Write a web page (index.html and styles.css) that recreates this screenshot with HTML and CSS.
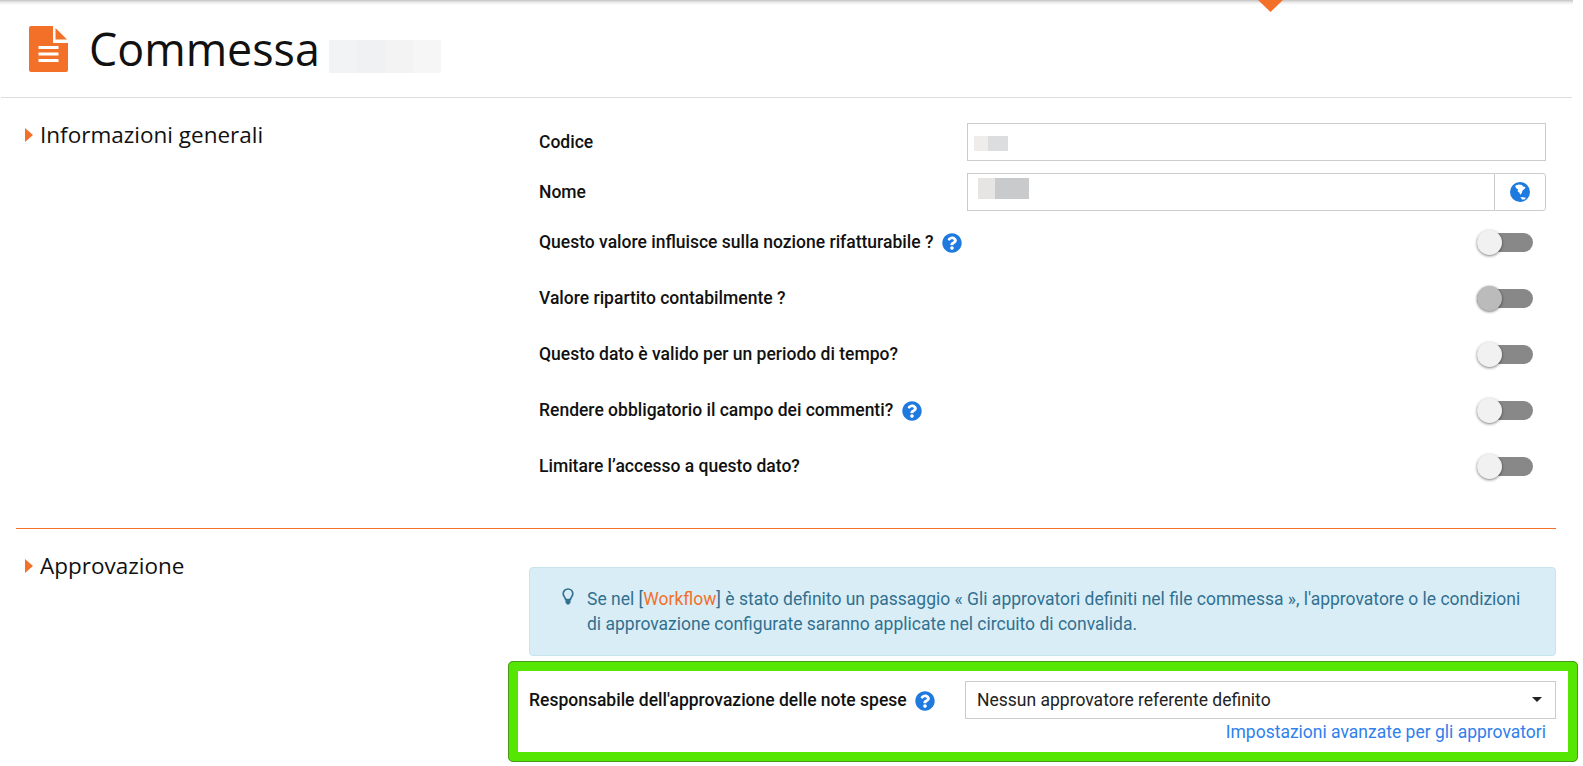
FILE: index.html
```html
<!DOCTYPE html>
<html lang="it">
<head>
<meta charset="utf-8">
<title>Commessa</title>
<link rel="stylesheet" href="styles.css">
</head>
<body>
<div class="topbar"><span class="caret"></span></div>
<header class="header">
  <svg class="file-icon" viewBox="0 0 39 46" aria-hidden="true">
    <path fill="#f37029" d="M2 0h22v17h15v27a2 2 0 0 1-2 2H2a2 2 0 0 1-2-2V2a2 2 0 0 1 2-2z"/>
    <path fill="#f37029" d="M26.500 2L38 13.500H26.500z"/>
    <path fill="#fff" d="M9.500 20h20v3h-20zM9.500 26.500h20v3h-20zM9.500 33h20v3h-20z"/>
  </svg>
  <h1 class="title">Commessa</h1>
  <div class="blur blur-title"><i></i><i></i><i></i><i></i></div>
</header>

<section class="section section-info">
  <h2 class="heading">Informazioni generali</h2>
  <div class="fields">
    <div class="row row-field">
      <label class="label">Codice</label>
      <div class="input"><div class="blur blur-code"><i></i><i></i></div></div>
    </div>
    <div class="row row-field">
      <label class="label">Nome</label>
      <div class="input input-group"><div class="blur blur-name"><i></i><i></i></div></div>
      <button class="globe-btn" type="button">
        <svg class="globe" viewBox="0 0 20 20" aria-hidden="true">
          <circle cx="10" cy="10" r="10" fill="#1f7ae0"/>
          <path fill="#fff" d="M6 3.200L9 2.400l3 .6 1 1.500 2.500.5-1 2-2 1.500-.7 2.500-1.600 1.800-.9-2.300-1.800-1.300.7-1.700-1.700-1-1.300-2z"/>
          <path fill="#fff" d="M10.500 15l2.500.3 3 .5-1.500 1.700-2.500 0z"/>
        </svg>
      </button>
    </div>
    <div class="row row-toggle">
      <span class="label">Questo valore influisce sulla nozione rifatturabile ?
        <svg class="help" viewBox="0 0 512 512" aria-hidden="true"><use href="#q"/></svg></span>
      <span class="toggle"><span class="thumb"></span></span>
    </div>
    <div class="row row-toggle">
      <span class="label">Valore ripartito contabilmente ?</span>
      <span class="toggle"><span class="thumb thumb-focus"></span></span>
    </div>
    <div class="row row-toggle">
      <span class="label">Questo dato è valido per un periodo di tempo?</span>
      <span class="toggle"><span class="thumb"></span></span>
    </div>
    <div class="row row-toggle">
      <span class="label">Rendere obbligatorio il campo dei commenti?
        <svg class="help" viewBox="0 0 512 512" aria-hidden="true"><use href="#q"/></svg></span>
      <span class="toggle"><span class="thumb"></span></span>
    </div>
    <div class="row row-toggle">
      <span class="label">Limitare l’accesso a questo dato?</span>
      <span class="toggle"><span class="thumb"></span></span>
    </div>
  </div>
</section>

<hr class="divider">

<section class="section section-approval">
  <h2 class="heading">Approvazione</h2>
  <div class="alert">
    <svg class="bulb" viewBox="0 0 12 17" aria-hidden="true">
      <path fill="none" stroke="#31708f" stroke-width="1.700" d="M6 1a4.800 4.800 0 0 0-4.800 4.800c0 2.400 2 3.400 2.400 5.700h4.800c.4-2.300 2.400-3.300 2.400-5.700A4.800 4.800 0 0 0 6 1z"/>
      <path fill="#31708f" d="M3.500 11h5v3.500l-1.500 2H5l-1.500-2z"/>
    </svg>
    <p class="alert-text">Se nel [<span class="accent">Workflow</span>] è stato definito un passaggio « Gli approvatori definiti nel file commessa », l'approvatore o le condizioni di approvazione configurate saranno applicate nel circuito di convalida.</p>
  </div>
</section>

<div class="highlight">
  <div class="highlight-row">
    <span class="label label-approver">Responsabile dell'approvazione delle note spese
      <svg class="help" viewBox="0 0 512 512" aria-hidden="true"><use href="#q"/></svg></span>
    <div class="select">Nessun approvatore referente definito<span class="select-arrow"></span></div>
  </div>
  <a class="advanced" href="#">Impostazioni avanzate per gli approvatori</a>
</div>

<svg class="defs" aria-hidden="true"><defs>
  <path id="q" fill="#1f7ae0" d="M504 256c0 136.997-111.043 248-248 248S8 392.997 8 256C8 119.083 119.043 8 256 8s248 111.083 248 248zM262.655 90c-54.497 0-89.255 22.957-116.549 63.758-3.536 5.286-2.353 12.415 2.715 16.258l34.699 26.310c5.205 3.947 12.621 3.008 16.665-2.122 17.864-22.658 30.113-35.797 57.303-35.797 20.429 0 45.698 13.148 45.698 32.958 0 14.976-12.363 22.667-32.534 33.976C247.128 238.528 216 254.941 216 296v4c0 6.627 5.373 12 12 12h56c6.627 0 12-5.373 12-12v-1.333c0-28.462 83.186-29.647 83.186-106.667 0-58.002-60.165-102-116.531-102zM256 338c-25.365 0-46 20.635-46 46 0 25.364 20.635 46 46 46s46-20.636 46-46c0-25.365-20.635-46-46-46z"/>
</defs></svg>
</body>
</html>
```
FILE: styles.css
```css
* { box-sizing: border-box; }
html, body { margin: 0; padding: 0; background: #fff; }
body {
  width: 1583px;
  height: 766px;
  overflow: hidden;
  position: relative;
  font-family: "Roboto", sans-serif;
  font-size: 17.5px;
  color: #111;
}
.topbar {
  position: relative;
  width: 1573px;
  height: 5px;
  background: linear-gradient(#c4c4c4, #ececec 50%, #fff);
}
.caret {
  position: absolute;
  left: 1258px;
  top: 0;
  width: 25px;
  height: 12px;
  background: #f37029;
  clip-path: polygon(0 0, 100% 0, 50% 100%);
}
.header {
  display: flex;
  align-items: flex-start;
  height: 93px;
  width: 1571px;
  margin-left: 1px;
  padding: 21px 0 0 28px;
  border-bottom: 1px solid #ddd;
}
.file-icon { width: 39px; height: 46px; flex: none; }
.title {
  margin: -7px 0 0 21px;
  font: 400 44.8px/60px "Open Sans", sans-serif;
  color: #111;
}
.blur { display: flex; }
.blur i { display: block; flex: 1; height: 100%; }
.blur-title {
  width: 112px;
  height: 33px;
  margin: 14px 0 0 9px;
}
.blur-title i:nth-child(1) { background: #f2f3f4; }
.blur-title i:nth-child(2) { background: #f0f1f2; }
.blur-title i:nth-child(3) { background: #f3f3f4; }
.blur-title i:nth-child(4) { background: #f6f6f7; }
.blur-code { width: 34px; height: 15px; margin: 12px 0 0 6px; }
.blur-code i:nth-child(1) { background: #eeedeb; flex: 2; }
.blur-code i:nth-child(2) { background: #dcdddf; flex: 3; }
.blur-name { width: 51px; height: 21px; margin: 4px 0 0 10px; }
.blur-name i:nth-child(1) { background: #e6e5e3; flex: 1; }
.blur-name i:nth-child(2) { background: #c9cacc; flex: 2; }
.section {
  display: grid;
  grid-template-columns: 529px 1fr;
}
.section-info { padding-top: 25px; }
.section-info .heading { margin-top: -3px; }
.heading {
  position: relative;
  margin: 0;
  padding-left: 40px;
  font: 400 22.5px/30px "Open Sans", sans-serif;
  color: #111;
}
.heading::before {
  content: "";
  position: absolute;
  left: 25px;
  top: 8px;
  border-left: 8px solid #f37029;
  border-top: 7px solid transparent;
  border-bottom: 7px solid transparent;
}
.fields { padding-left: 10px; width: 1017px; }
.row { display: flex; align-items: center; }
.row-field { height: 38px; margin-bottom: 12px; }
.row-field:nth-child(2) { margin-bottom: 3px; }
.row-toggle { height: 56px; justify-content: space-between; padding-right: 13px; }
.label { font-weight: 500; font-size: 17.5px; line-height: 22px; color: #111; display: block; }
.row-field .label { width: 428px; flex: none; }
.input {
  flex: 1;
  height: 38px;
  border: 1px solid #ccc;
  background: #fff;
}
.input-group { border-right: 0; }
.globe-btn {
  width: 52px;
  height: 38px;
  padding: 0;
  display: flex;
  align-items: center;
  justify-content: center;
  background: #fff;
  border: 1px solid #ccc;
  border-radius: 0 3px 3px 0;
}
.globe { width: 20px; height: 20px; }
.help { width: 20px; height: 20px; vertical-align: -5px; margin-left: 4px; }
.toggle {
  position: relative;
  display: block;
  width: 56px;
  height: 19px;
  border-radius: 10px;
  background: #888;
}
.thumb {
  position: absolute;
  left: 0;
  top: -3px;
  width: 25px;
  height: 25px;
  border-radius: 50%;
  background: #f1f1f1;
  box-shadow: 0 1px 3px rgba(0, 0, 0, .5);
}
.thumb-focus { background: #bbb; box-shadow: 0 1px 3px rgba(0, 0, 0, .45), 0 0 2px rgba(0, 0, 0, .2); }
.divider {
  height: 1px;
  margin: 34px 27px 0 16px;
  border: 0;
  background: #f37029;
}
.section-approval { padding-top: 38px; }
.section-approval .heading { margin-top: -16px; }
.alert {
  display: flex;
  width: 1027px;
  height: 89px;
  padding: 19px 20px 0 32px;
  background: #d9edf7;
  border: 1px solid #c5e4ee;
  border-radius: 4px;
  color: #31708f;
}
.bulb { width: 12px; height: 17px; flex: none; margin: 1px 13px 0 0; }
.alert-text { margin: 0; line-height: 25px; }
.accent { color: #f37029; }
.highlight {
  width: 1070px;
  height: 101px;
  margin: 5px 0 0 508px;
  padding: 0 12px 0 11px;
  border: 10px solid #55e604;
  border-radius: 5px;
  outline: 1px solid rgba(60, 90, 40, .55);
  outline-offset: -1px;
  background: #fff;
}
.highlight-row { display: flex; align-items: center; justify-content: space-between; margin-top: 10px; }
.label-approver { flex: none; }
.select {
  position: relative;
  width: 591px;
  height: 38px;
  padding: 0 11px;
  line-height: 36px;
  border: 1px solid #ccc;
  color: #222;
}
.select-arrow {
  position: absolute;
  right: 13px;
  top: 15px;
  border-top: 5px solid #222;
  border-left: 5px solid transparent;
  border-right: 5px solid transparent;
}
.advanced {
  display: block;
  margin-top: 2px;
  margin-right: 10px;
  text-align: right;
  line-height: 22px;
  color: #2f80ed;
  text-decoration: none;
}
.defs { position: absolute; width: 0; height: 0; }
```
